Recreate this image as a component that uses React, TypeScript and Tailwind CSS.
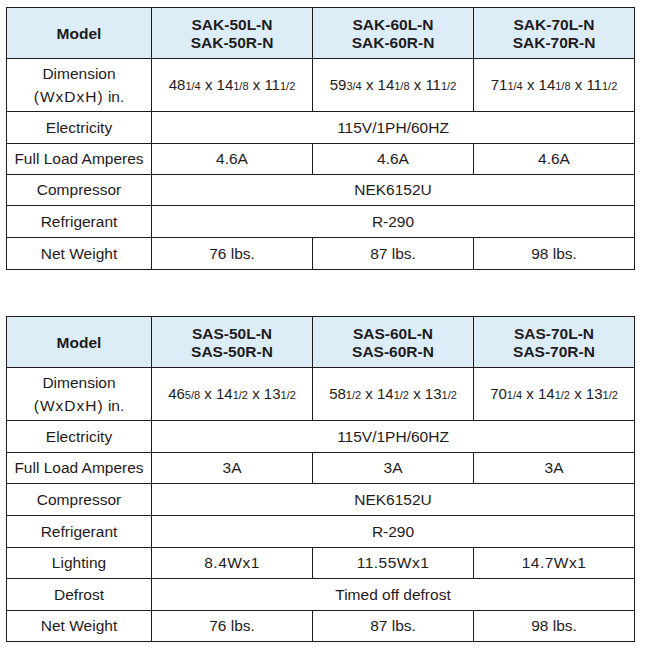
import React from "react";

type Cell = { content: React.ReactNode; span?: number };
type Row = { label: React.ReactNode; cells: Cell[]; h: string };

const Frac = ({ n }: { n: string }) => <span className="text-[11px]">{n}</span>;

const dim = (a: string, fa: string, b: string, fb: string, c: string, fc: string) => (
  <span className="text-[15px]">
    {a}
    <Frac n={fa} /> x {b}
    <Frac n={fb} /> x {c}
    <Frac n={fc} />
  </span>
);

const DimLabel = () => (
  <span className="leading-[19px]">
    Dimension
    <br />
    <span className="tracking-[1px]">(WxDxH)</span> in.
  </span>
);

function SpecTable({ models, rows }: { models: [string, string][]; rows: Row[] }) {
  return (
    <table className="table-fixed w-[629px] border-collapse text-[15.5px] text-[#1f1b1c] text-center">
      <colgroup>
        <col className="w-[145px]" />
        <col className="w-[161px]" />
        <col className="w-[161px]" />
        <col className="w-[161px]" />
      </colgroup>
      <tbody>
        <tr className="h-[51px] bg-[#dcedf8]">
          <td className="border border-[#1f1b1c] font-bold pt-[2px]">Model</td>
          {models.map(([l, r]) => (
            <td key={l} className="border border-[#1f1b1c] font-bold leading-[18px] pt-[2px]">
              {l}
              <br />
              {r}
            </td>
          ))}
        </tr>
        {rows.map((row, i) => (
          <tr key={i} className={row.h}>
            <td className="border border-[#1f1b1c] p-0">{row.label}</td>
            {row.cells.map((c, j) => (
              <td key={j} colSpan={c.span ?? 1} className="border border-[#1f1b1c] p-0">
                {c.content}
              </td>
            ))}
          </tr>
        ))}
      </tbody>
    </table>
  );
}

const three = (a: React.ReactNode, b: React.ReactNode, c: React.ReactNode): Cell[] => [
  { content: a },
  { content: b },
  { content: c },
];
const one = (a: React.ReactNode): Cell[] => [{ content: a, span: 3 }];

const watt = (v: string) => <span className="tracking-[0.5px]">{v}</span>;

export default function App() {
  const sak: Row[] = [
    {
      label: <DimLabel />,
      h: "h-[53px]",
      cells: three(
        dim("48", "1/4", "14", "1/8", "11", "1/2"),
        dim("59", "3/4", "14", "1/8", "11", "1/2"),
        dim("71", "1/4", "14", "1/8", "11", "1/2")
      ),
    },
    { label: "Electricity", h: "h-[32px]", cells: one("115V/1PH/60HZ") },
    { label: "Full Load Amperes", h: "h-[31px]", cells: three("4.6A", "4.6A", "4.6A") },
    { label: "Compressor", h: "h-[31px]", cells: one("NEK6152U") },
    { label: "Refrigerant", h: "h-[32px]", cells: one("R-290") },
    { label: "Net Weight", h: "h-[32px]", cells: three("76 lbs.", "87 lbs.", "98 lbs.") },
  ];

  const sas: Row[] = [
    {
      label: <DimLabel />,
      h: "h-[53px]",
      cells: three(
        dim("46", "5/8", "14", "1/2", "13", "1/2"),
        dim("58", "1/2", "14", "1/2", "13", "1/2"),
        dim("70", "1/4", "14", "1/2", "13", "1/2")
      ),
    },
    { label: "Electricity", h: "h-[32px]", cells: one("115V/1PH/60HZ") },
    { label: "Full Load Amperes", h: "h-[31px]", cells: three("3A", "3A", "3A") },
    { label: "Compressor", h: "h-[32px]", cells: one("NEK6152U") },
    { label: "Refrigerant", h: "h-[32px]", cells: one("R-290") },
    { label: "Lighting", h: "h-[31px]", cells: three(watt("8.4Wx1"), watt("11.55Wx1"), watt("14.7Wx1")) },
    { label: "Defrost", h: "h-[32px]", cells: one("Timed off defrost") },
    { label: "Net Weight", h: "h-[31px]", cells: three("76 lbs.", "87 lbs.", "98 lbs.") },
  ];

  return (
    <div className="w-[651px] h-[650px] bg-white pl-[6px] pt-[7px] font-['Liberation_Sans',Arial,sans-serif]">
      <SpecTable
        models={[
          ["SAK-50L-N", "SAK-50R-N"],
          ["SAK-60L-N", "SAK-60R-N"],
          ["SAK-70L-N", "SAK-70R-N"],
        ]}
        rows={sak}
      />
      <div className="h-[46px]" />
      <SpecTable
        models={[
          ["SAS-50L-N", "SAS-50R-N"],
          ["SAS-60L-N", "SAS-60R-N"],
          ["SAS-70L-N", "SAS-70R-N"],
        ]}
        rows={sas}
      />
    </div>
  );
}
